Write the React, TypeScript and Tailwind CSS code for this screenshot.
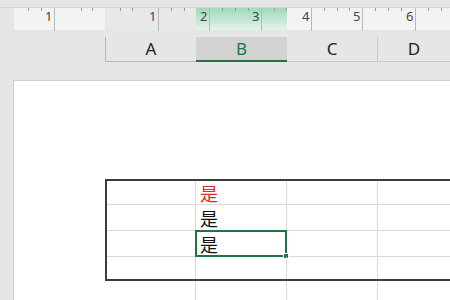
import React from 'react';

// Ruler marks: [x, label] – major units ~52px apart
const majors: [number, string][] = [
  [54, '1'],
  [158, '1'],
  [209, '2'],
  [261, '3'],
  [311, '4'],
  [362, '5'],
  [415, '6'],
];

const minors = [28, 41, 81, 92, 120, 132, 171, 184, 222, 235, 248, 274, 286, 324, 337, 349, 375, 388, 401, 428, 441];

const cjk = { fontFamily: '"Noto Sans CJK SC", "Noto Sans", sans-serif' };

function Ruler() {
  return (
    <div className="relative flex h-[23px] border-t border-[#d6d6d6]">
      <div className="w-[14px] bg-[#e6e6e6]" />
      <div className="w-[91px] bg-[#f3f3f3]" />
      <div className="w-[91px] bg-[#e8e8e8]" />
      <div className="w-[91px] bg-gradient-to-b from-[#9fd9bb] to-[#e3f3ea]" />
      <div className="flex-1 bg-[#f3f3f3]" />
      <svg className="absolute inset-0" width="450" height="23">
        {minors.map((x) => (
          <line key={x} x1={x + 0.5} x2={x + 0.5} y1={0} y2={3} stroke="#9a9a9a" strokeWidth={1} />
        ))}
        {majors.map(([x]) => (
          <line key={x} x1={x + 0.5} x2={x + 0.5} y1={0} y2={23} stroke="#b8b8b8" strokeWidth={1} />
        ))}
      </svg>
      {majors.map(([x, t]) => (
        <span
          key={x}
          className="absolute top-[2px] text-[13px] leading-none text-[#444]"
          style={{ left: x - 9 }}
        >
          {t}
        </span>
      ))}
    </div>
  );
}

function Header() {
  return (
    <div className="flex h-[25px]">
      <div className="w-[105px]" />
      <div className="w-[91px] flex items-center justify-center border-l border-b border-[#b8b8b8] bg-[#e6e6e6] text-[17px] text-[#222]">
        A
      </div>
      <div className="w-[91px] flex items-center justify-center border-b-2 border-[#217346] bg-[#d2d2d2] text-[17px] text-[#217346]">
        B
      </div>
      <div className="w-[91px] flex items-center justify-center border-r border-b border-[#c8c8c8] text-[17px] text-[#222]">
        C
      </div>
      <div className="flex-1 flex items-center justify-center border-b border-[#c8c8c8] text-[17px] text-[#222]">
        D
      </div>
    </div>
  );
}

const line = 'border-r border-[#dadada]';

function Cells({ b, h, selected }: { b?: React.ReactNode; h: string; selected?: boolean }) {
  return (
    <div className={`flex ${h}`}>
      <div className={`w-[89px] shrink-0 ${line}`} />
      <div className={`relative w-[91px] shrink-0 ${line} pl-[4px] flex items-center`}>
        {b}
        {selected && (
          <div className="absolute -left-[1px] -top-[1px] w-[92px] h-[27px] border-2 border-[#217346]">
            <div className="absolute -right-[4px] -bottom-[4px] w-[6px] h-[6px] bg-[#217346] border border-white" />
          </div>
        )}
      </div>
      <div className={`w-[91px] shrink-0 ${line}`} />
    </div>
  );
}

const rowLine = 'h-[1px] bg-[#dadada]';
const thick = 'h-[2px] bg-[#3c3c3c]';

export default function App() {
  const ch = (color: string) => (
    <span className={`text-[18px] leading-none ${color}`} style={cjk}>
      是
    </span>
  );
  return (
    <div
      className="relative w-[450px] h-[300px] overflow-hidden bg-[#e6e6e6]"
      style={{ fontFamily: '"Noto Sans", "Liberation Sans", sans-serif' }}
    >
      <div className="h-[7px]" />
      <Ruler />
      <div className="h-[7px]" />
      <Header />
      <div className="h-[18px]" />
      <div className="flex">
        <div className="w-[13px] shrink-0" />
        <div className="flex-1 h-[220px] bg-white border-l border-t border-[#cfcfcf]">
          <div className="h-[98px]" />
          <div className="flex">
            <div className="w-[91px] shrink-0" />
            <div className="w-[2px] shrink-0 bg-[#3c3c3c]" />
            <div className="flex-1">
              <div className={thick} />
              <Cells h="h-[23px]" b={ch('text-[#e0282e]')} />
              <div className={rowLine} />
              <Cells h="h-[25px]" b={ch('text-[#111]')} />
              <div className={rowLine} />
              <Cells h="h-[25px]" b={ch('text-[#111]')} selected />
              <div className={rowLine} />
              <Cells h="h-[22px]" />
              <div className={thick} />
            </div>
          </div>
          <div className="flex">
            <div className="w-[93px] shrink-0" />
            <Cells h="h-[30px]" />
          </div>
        </div>
      </div>
    </div>
  );
}
